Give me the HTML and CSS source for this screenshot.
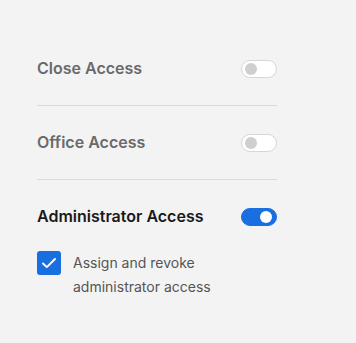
FILE: index.html
```html
<!DOCTYPE html>
<html lang="en">
<head>
    <meta charset="UTF-8">
    <meta name="viewport" content="width=device-width, initial-scale=1.0">
    <title>Access Settings</title>
    <link rel="stylesheet" href="styles.css">
</head>
<body>
    <div class="access-list">
        <div class="access-row">
            <span class="access-label">Close Access</span>
            <span class="toggle"></span>
        </div>
        <div class="access-row">
            <span class="access-label">Office Access</span>
            <span class="toggle"></span>
        </div>
        <div class="access-row active">
            <span class="access-label">Administrator Access</span>
            <span class="toggle on"></span>
        </div>
        <div class="perm">
            <span class="checkbox">
                <svg width="18" height="18" viewBox="0 0 18 18"><path d="M3 9.5l3.8 3.6L15 5" fill="none" stroke="#fff" stroke-width="1.9" stroke-linecap="round" stroke-linejoin="round"/></svg>
            </span>
            <span class="perm-text">Assign and revoke<br>administrator access</span>
        </div>
    </div>
</body>
</html>
```

FILE: styles.css
```css
body { margin: 0; background: #f3f3f3; font-family: Inter, "Noto Sans", sans-serif; }
.access-list { width: 240px; padding: 33px 0 0 37px; }
.access-row { display: flex; align-items: center; justify-content: space-between; padding: 26px 0; line-height: 21px; border-bottom: 1px solid #dcdcdc; }
.access-row:first-child { padding-top: 25px; }
.access-row.active { border-bottom: none; padding-bottom: 24px; }
.access-label { font-size: 16px; font-weight: 600; color: #6a6a6a; }
.active .access-label { color: #1a1a1a; }
.toggle { position: relative; width: 34px; height: 16px; border: 1px solid #d6d6d6; border-radius: 9px; background: #fff; }
.toggle::after { content: ""; position: absolute; left: 3px; top: 2px; width: 12px; height: 12px; border-radius: 50%; background: #cfcfcf; }
.toggle.on { background: #1a6fe0; border-color: #1a6fe0; }
.toggle.on::after { left: auto; right: 4px; background: #fff; }
.perm { display: flex; gap: 12px; }
.checkbox { width: 24px; height: 24px; border-radius: 3px; background: #1a6fe0; display: flex; align-items: center; justify-content: center; flex-shrink: 0; }
.perm-text { font-size: 14px; line-height: 24px; color: #555; }
```
